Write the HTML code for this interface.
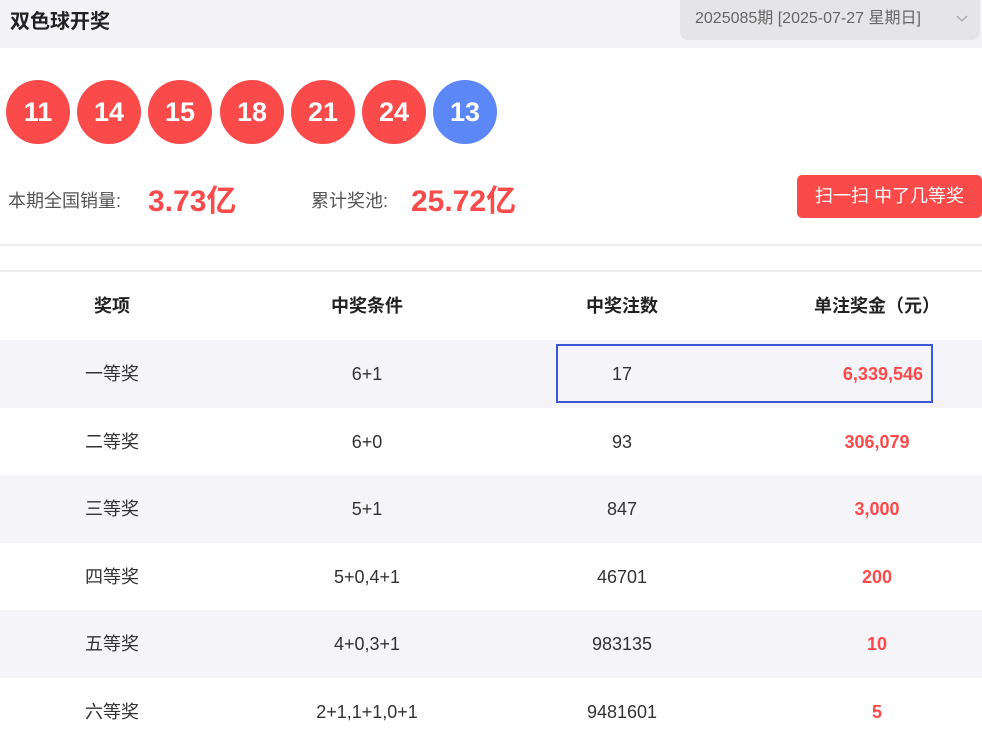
<!DOCTYPE html>
<html><head><meta charset="utf-8"><style>
*{margin:0;padding:0;box-sizing:border-box}
body{width:982px;height:743px;overflow:hidden;background:#fff;font-family:"Liberation Sans","Noto Sans CJK SC",sans-serif;color:#333;position:relative}
.hdr{position:absolute;left:0;top:0;width:982px;height:48px;background:#f4f4f8}
.title{position:absolute;left:10px;top:5px;font-size:20px;font-weight:bold;color:#222}
.dd{position:absolute;left:680px;top:0;width:300px;height:40px;background:#e5e5e7;border-radius:0 0 8px 8px;font-size:16px;color:#666;line-height:38px;padding-left:15px}
.dd svg{position:absolute;right:12px;top:15px}
.ball{position:absolute;top:80px;width:64px;height:64px;border-radius:50%;background:#fa4a4a;color:#fff;font-weight:bold;font-size:27px;text-align:center;line-height:64px}
.lbl{position:absolute;top:187px;font-size:18px;color:#555}
.big{position:absolute;top:176px;font-size:30px;font-weight:bold;color:#fa4a4a}
.btn{position:absolute;left:797px;top:175px;width:185px;height:43px;background:#fa4a4a;border-radius:5px;color:#fff;font-size:18px;text-align:center;line-height:42px}
.line{position:absolute;left:0;width:982px;height:2px;background:#eeeef0}
.row{position:absolute;left:0;width:982px;height:68px;font-size:18px}
.row div{position:absolute;top:0;line-height:68px;text-align:center;width:240px}
.c1{left:-8px}.c2{left:247px}.c3{left:502px}.c4{left:757px}
.g{background:#f5f5f9}
.th{font-weight:bold;color:#222}
.r{color:#fa4a4a;font-weight:bold}
.box{position:absolute;left:556px;top:344px;width:377px;height:59px;border:2px solid #3b5bd6}
</style></head><body>
<div class="hdr"></div>
<div class="title">双色球开奖</div>
<div class="dd">2025085期 [2025-07-27 星期日]<svg width="12" height="8" viewBox="0 0 12 8"><path d="M1 1l5 5 5-5" fill="none" stroke="#aaa" stroke-width="1.3"/></svg></div>
<div class="ball" style="left:6px">11</div>
<div class="ball" style="left:77px">14</div>
<div class="ball" style="left:148px">15</div>
<div class="ball" style="left:220px">18</div>
<div class="ball" style="left:291px">21</div>
<div class="ball" style="left:362px">24</div>
<div class="ball" style="left:433px;background:#5b87f7">13</div>
<div class="lbl" style="left:8px">本期全国销量:</div>
<div class="big" style="left:148px">3.73亿</div>
<div class="lbl" style="left:311px">累计奖池:</div>
<div class="big" style="left:411px">25.72亿</div>
<div class="btn">扫一扫 中了几等奖</div>
<div class="line" style="top:244px"></div>
<div class="line" style="top:270px"></div>
<div class="row th" style="top:272px"><div class="c1">奖项</div><div class="c2">中奖条件</div><div class="c3">中奖注数</div><div class="c4">单注奖金（元）</div></div>
<div class="row g" style="top:340px"><div class="c1">一等奖</div><div class="c2">6+1</div><div class="c3">17</div><div class="c4 r" style="text-align:right;width:166px">6,339,546</div></div>
<div class="row" style="top:408px"><div class="c1">二等奖</div><div class="c2">6+0</div><div class="c3">93</div><div class="c4 r">306,079</div></div>
<div class="row g" style="top:475px"><div class="c1">三等奖</div><div class="c2">5+1</div><div class="c3">847</div><div class="c4 r">3,000</div></div>
<div class="row" style="top:543px"><div class="c1">四等奖</div><div class="c2">5+0,4+1</div><div class="c3">46701</div><div class="c4 r">200</div></div>
<div class="row g" style="top:610px"><div class="c1">五等奖</div><div class="c2">4+0,3+1</div><div class="c3">983135</div><div class="c4 r">10</div></div>
<div class="row" style="top:678px"><div class="c1">六等奖</div><div class="c2">2+1,1+1,0+1</div><div class="c3">9481601</div><div class="c4 r">5</div></div>
<div class="box"></div>
</body></html>
